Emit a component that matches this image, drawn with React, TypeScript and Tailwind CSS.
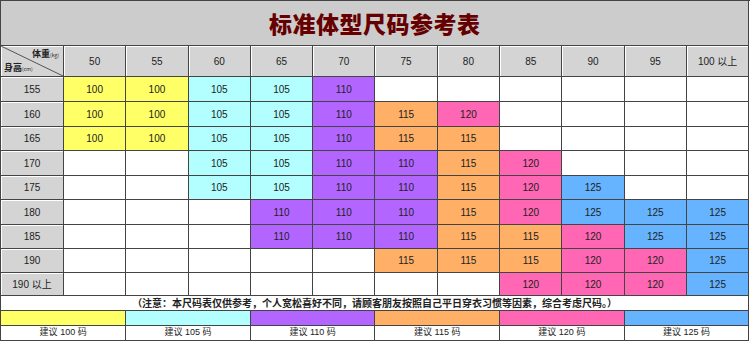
import React from "react";

type Size = 100 | 105 | 110 | 115 | 120 | 125 | null;

const weights = ["50", "55", "60", "65", "70", "75", "80", "85", "90", "95", "100 以上"];

const colors: Record<number, string> = {
  100: "bg-[#ffff66]",
  105: "bg-[#b3ffff]",
  110: "bg-[#b366ff]",
  115: "bg-[#ffb066]",
  120: "bg-[#ff66b3]",
  125: "bg-[#66b3ff]",
};

const _ = null;

const rows: { height: string; sizes: Size[] }[] = [
  { height: "155", sizes: [100, 100, 105, 105, 110, _, _, _, _, _, _] },
  { height: "160", sizes: [100, 100, 105, 105, 110, 115, 120, _, _, _, _] },
  { height: "165", sizes: [100, 100, 105, 105, 110, 115, 115, _, _, _, _] },
  { height: "170", sizes: [_, _, 105, 105, 110, 110, 115, 120, _, _, _] },
  { height: "175", sizes: [_, _, 105, 105, 110, 110, 115, 120, 125, _, _] },
  { height: "180", sizes: [_, _, _, 110, 110, 110, 115, 120, 125, 125, 125] },
  { height: "185", sizes: [_, _, _, 110, 110, 110, 115, 115, 120, 125, 125] },
  { height: "190", sizes: [_, _, _, _, _, 115, 115, 115, 120, 120, 125] },
  { height: "190 以上", sizes: [_, _, _, _, _, _, _, 120, 120, 120, 125] },
];

const legend: Size[] = [100, 105, 110, 115, 120, 125];

const cell = "border-r border-b border-[#444] flex items-center justify-center";
const grayCell = "bg-[#d4d4d4] shadow-[inset_1px_1px_0_#fff]";

export default function App() {
  return (
    <div className="w-[750px] h-[343px] bg-white text-[#222] font-['Liberation_Sans','Noto_Sans_CJK_SC',sans-serif]">
      <div className="grid grid-cols-[63px_repeat(11,62.3px)] grid-rows-[45px_31px_25px_25px_24px_25px_24px_25px_24px_24px_23px_15px_15px_15px] border-l border-t border-[#444] text-[10px]">
        {/* Title */}
        <div className={`${cell} col-span-12 bg-[#cccccc]`}>
          <span className="text-[23px] font-black text-[#660000] tracking-[0.5px] font-['Noto_Sans_CJK_SC',sans-serif]">
            标准体型尺码参考表
          </span>
        </div>

        {/* Header row */}
        <div className={`${cell} ${grayCell} relative`}>
          <svg className="absolute inset-0 w-full h-full" viewBox="0 0 62 30" preserveAspectRatio="none">
            <line x1="0" y1="0" x2="62" y2="30" stroke="#333" strokeWidth="0.8" />
          </svg>
          <span className="absolute right-[4px] top-[3px] text-[9px] font-bold leading-none font-['Noto_Sans_CJK_SC',sans-serif]">
            体重<span className="text-[5px] font-normal">(kg)</span>
          </span>
          <span className="absolute left-[3px] bottom-[4px] text-[9px] font-bold leading-none font-['Noto_Sans_CJK_SC',sans-serif]">
            身高<span className="text-[5px] font-normal">(cm)</span>
          </span>
        </div>
        {weights.map((w) => (
          <div key={w} className={`${cell} ${grayCell}`}>
            {w}
          </div>
        ))}

        {/* Body */}
        {rows.map((r) => (
          <React.Fragment key={r.height}>
            <div className={`${cell} ${grayCell}`}>{r.height}</div>
            {r.sizes.map((s, i) => (
              <div key={i} className={`${cell} ${s ? colors[s] : "bg-white"}`}>
                {s ?? ""}
              </div>
            ))}
          </React.Fragment>
        ))}

        {/* Note */}
        <div className={`${cell} col-span-12 bg-white`}>
          <span className="text-[10px] font-bold leading-none font-['Noto_Sans_CJK_SC',sans-serif]">
            （注意：本尺码表仅供参考，个人宽松喜好不同，请顾客朋友按照自己平日穿衣习惯等因素，综合考虑尺码。）
          </span>
        </div>

        {/* Legend */}
        {legend.map((s) => (
          <div key={`c${s}`} className={`${cell} col-span-2 ${colors[s as number]}`} />
        ))}
        {legend.map((s) => (
          <div key={`t${s}`} className={`${cell} col-span-2 bg-white text-[9px]`}>
            建议 {s} 码
          </div>
        ))}
      </div>
    </div>
  );
}
